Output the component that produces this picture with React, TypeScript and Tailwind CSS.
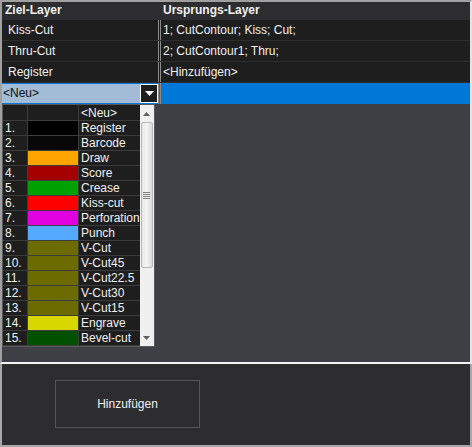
import React from "react";

// --- Data ---
type LayerRow = { ziel: string; quelle: string };

const rows: LayerRow[] = [
  { ziel: "Kiss-Cut", quelle: "1; CutContour; Kiss; Cut;" },
  { ziel: "Thru-Cut", quelle: "2; CutContour1; Thru;" },
  { ziel: "Register", quelle: "<Hinzufügen>" },
];

type ListItem = { nr: string; name: string; color: string };

const items: ListItem[] = [
  { nr: "1.", name: "Register", color: "bg-[#000000]" },
  { nr: "2.", name: "Barcode", color: "bg-[#080808]" },
  { nr: "3.", name: "Draw", color: "bg-[#ffa500]" },
  { nr: "4.", name: "Score", color: "bg-[#a50000]" },
  { nr: "5.", name: "Crease", color: "bg-[#00a000]" },
  { nr: "6.", name: "Kiss-cut", color: "bg-[#ff0000]" },
  { nr: "7.", name: "Perforation", color: "bg-[#e000e0]" },
  { nr: "8.", name: "Punch", color: "bg-[#55aaff]" },
  { nr: "9.", name: "V-Cut", color: "bg-[#6b6b00]" },
  { nr: "10.", name: "V-Cut45", color: "bg-[#6b6b00]" },
  { nr: "11.", name: "V-Cut22.5", color: "bg-[#6b6b00]" },
  { nr: "12.", name: "V-Cut30", color: "bg-[#6b6b00]" },
  { nr: "13.", name: "V-Cut15", color: "bg-[#6b6b00]" },
  { nr: "14.", name: "Engrave", color: "bg-[#d8d800]" },
  { nr: "15.", name: "Bevel-cut", color: "bg-[#005000]" },
];

// --- Dropdown list (open combobox) ---
const LayerDropdown = () => (
  <div className="absolute left-0 top-[21px] flex w-[153px] border border-[#5a5a5a] bg-[#1e1e1e]">
    <div className="flex-1">
      <div className="flex h-[16px] border-b border-[#3c3c3c]">
        <div className="w-[25px] border-r border-[#3c3c3c]" />
        <div className="w-[51px] border-r border-[#3c3c3c]" />
        <div className="flex-1 pl-[2px] text-[12px] leading-[16px] text-[#f0f0f0]">
          {"<Neu>"}
        </div>
      </div>
      {items.map((it) => (
        <div key={it.nr} className="flex h-[15px] border-b border-[#3c3c3c]">
          <div className="w-[25px] border-r border-[#3c3c3c] pl-[2px] text-[12px] leading-[14px] text-[#f0f0f0]">
            {it.nr}
          </div>
          <div className={`w-[51px] border-r border-[#3c3c3c] ${it.color}`} />
          <div className="flex-1 pl-[2px] text-[12px] leading-[14px] text-[#f0f0f0]">
            {it.name}
          </div>
        </div>
      ))}
    </div>
    {/* scrollbar */}
    <div className="flex w-[16px] flex-col bg-[#f0f0f0]">
      <div className="flex h-[17px] items-center justify-center">
        <svg width="7" height="4" viewBox="0 0 7 4">
          <path d="M0 4 L3.5 0 L7 4 Z" fill="#606060" />
        </svg>
      </div>
      <div className="mx-[1px] flex h-[146px] items-center justify-center rounded-[2px] border border-[#b8b8b8] bg-gradient-to-r from-[#e8e8e8] via-[#f4f4f4] to-[#d8d8d8]">
        <div className="flex flex-col gap-[1px]">
          <div className="h-px w-[7px] bg-[#808080]" />
          <div className="h-px w-[7px] bg-[#808080]" />
          <div className="h-px w-[7px] bg-[#808080]" />
          <div className="h-px w-[7px] bg-[#808080]" />
        </div>
      </div>
      <div className="flex-1" />
      <div className="flex h-[17px] items-center justify-center">
        <svg width="7" height="4" viewBox="0 0 7 4">
          <path d="M0 0 L3.5 4 L7 0 Z" fill="#606060" />
        </svg>
      </div>
    </div>
  </div>
);

// --- Main Component ---
const App = () => {
  return (
    <div
      className="flex h-[447px] w-[472px] flex-col bg-[#2d2d30] text-[12px] text-[#f0f0f0]"
      style={{ fontFamily: '"Liberation Sans", Arial, sans-serif' }}
    >
      {/* grid */}
      <div className="h-[364px] border-t-2 border-l-2 border-r-2 border-b-2 border-t-[#a0a0a0] border-l-[#a0a0a0] border-r-[#e4e4e4] border-b-[#f4f4f4] bg-[#3f4046]">
        <div className="flex h-[18px] bg-[#2d2d30] font-bold leading-[17px]">
          <div className="w-[159px] pl-[3px]">Ziel-Layer</div>
          <div className="flex-1 pl-[2px]">Ursprungs-Layer</div>
        </div>
        {rows.map((r) => (
          <div key={r.ziel} className="flex h-[21px] border-b border-[#2e2e30] bg-[#1e1e1e] leading-[20px]">
            <div className="w-[156px] pl-[6px]">{r.ziel}</div>
            <div className="w-[3px] border-x border-[#8a8a8a]" />
            <div className="flex-1 pl-[2px]">{r.quelle}</div>
          </div>
        ))}
        {/* edit row */}
        <div className="flex h-[21px] bg-[#0078d7]">
          <div className="relative w-[156px] pt-[1px]">
            <div className="flex h-[19px]">
              <div className="flex-1 bg-[#a2bcd8] pl-[1px] leading-[19px] text-[#101010]">
                {"<Neu>"}
              </div>
              <div className="flex w-[18px] items-center justify-center border border-white bg-[#1e1e1e]">
                <svg width="9" height="5" viewBox="0 0 9 5">
                  <path d="M0 0 L4.5 5 L9 0 Z" fill="#ffffff" />
                </svg>
              </div>
            </div>
            <LayerDropdown />
          </div>
          <div className="w-[3px] border-x border-[#8a8a8a]" />
          <div className="flex-1" />
        </div>
      </div>

      {/* bottom panel */}
      <div className="flex-1 border-x-2 border-b-2 border-[#a8a8a8] pl-[53px] pt-[16px]">
        <button
          type="button"
          className="h-[48px] w-[145px] border border-[#555555] bg-[#2d2d30] text-[12px] text-[#f0f0f0]"
        >
          Hinzufügen
        </button>
      </div>
    </div>
  );
};

export default App;
